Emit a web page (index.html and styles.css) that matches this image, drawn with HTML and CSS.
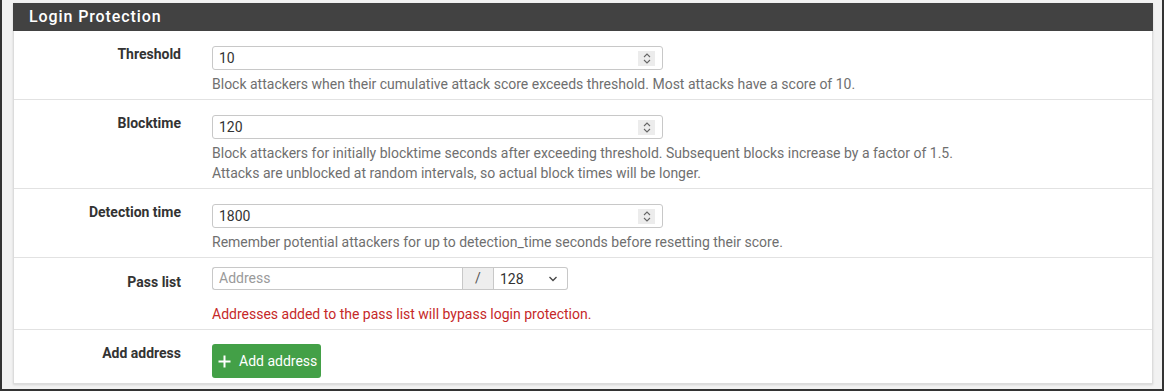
FILE: index.html
```html
<!DOCTYPE html>
<html>
<head>
<meta charset="utf-8">
<link rel="stylesheet" href="styles.css">
</head>
<body>
<div class="frame">
  <div class="panel">
    <div class="panel-heading">Login Protection</div>
    <div class="row">
      <div class="label">Threshold</div>
      <div class="control">
        <div class="input num"><span>10</span><span class="spin"><svg width="10" height="13" viewBox="0 0 10 13"><path d="M2 5 L5 2 L8 5 M2 8 L5 11 L8 8" fill="none" stroke="#666" stroke-width="1.1"/></svg></span></div>
        <div class="help">Block attackers when their cumulative attack score exceeds threshold. Most attacks have a score of 10.</div>
      </div>
    </div>
    <div class="row">
      <div class="label">Blocktime</div>
      <div class="control">
        <div class="input num"><span>120</span><span class="spin"><svg width="10" height="13" viewBox="0 0 10 13"><path d="M2 5 L5 2 L8 5 M2 8 L5 11 L8 8" fill="none" stroke="#666" stroke-width="1.1"/></svg></span></div>
        <div class="help">Block attackers for initially blocktime seconds after exceeding threshold. Subsequent blocks increase by a factor of 1.5.<br>Attacks are unblocked at random intervals, so actual block times will be longer.</div>
      </div>
    </div>
    <div class="row">
      <div class="label">Detection time</div>
      <div class="control">
        <div class="input num"><span>1800</span><span class="spin"><svg width="10" height="13" viewBox="0 0 10 13"><path d="M2 5 L5 2 L8 5 M2 8 L5 11 L8 8" fill="none" stroke="#666" stroke-width="1.1"/></svg></span></div>
        <div class="help">Remember potential attackers for up to detection_time seconds before resetting their score.</div>
      </div>
    </div>
    <div class="row row-pass">
      <div class="label">Pass list</div>
      <div class="control">
        <div class="group">
          <div class="addr">Address</div>
          <div class="addon">/</div>
          <div class="select"><span>128</span><svg width="10" height="6" viewBox="0 0 10 6"><path d="M1.5 1 L5 4.5 L8.5 1" fill="none" stroke="#444" stroke-width="1.3"/></svg></div>
        </div>
        <div class="help danger">Addresses added to the pass list will bypass login protection.</div>
      </div>
    </div>
    <div class="row row-add">
      <div class="label">Add address</div>
      <div class="control">
        <button class="btn"><svg width="13" height="13" viewBox="0 0 13 13"><path d="M6.5 0.5 V12.5 M0.5 6.5 H12.5" stroke="#fff" stroke-width="2"/></svg><span>Add address</span></button>
      </div>
    </div>
  </div>
</div>
</body>
</html>
```

FILE: styles.css
```css
* { box-sizing: border-box; }
html, body { margin: 0; padding: 0; }
body {
  font-family: Roboto, "Liberation Sans", sans-serif;
  font-size: 14px;
  line-height: 20px;
  color: #333;
}
.frame {
  width: 1164px;
  height: 391px;
  border: 2px solid #333;
  border-top: 0;
  background: #f2f2f2;
  padding: 3px 9px 0 11px;
  overflow: hidden;
}
.panel {
  background: #fff;
  border: 1px solid #dcdcdc;
  border-top: 0;
  box-shadow: 0 1px 2px rgba(0,0,0,0.12);
}
.panel-heading {
  background: #424242;
  color: #fff;
  height: 28px;
  margin: 0 -1px;
  padding: 4px 16px 0;
  font-size: 16px;
  line-height: 20px;
  font-weight: 500;
  letter-spacing: 0.9px;
}
.row {
  display: flex;
  padding: 13px 0 5px;
  border-top: 1px solid #e2e2e2;
}
.row:nth-child(2) { border-top: 0; }
.label {
  width: 167px;
  flex: none;
  text-align: right;
  font-weight: 700;
  color: #333;
}
.control {
  margin-left: 31px;
  padding-top: 2px;
}
.input {
  width: 451px;
  height: 24px;
  border: 1px solid #c8c8c8;
  border-radius: 3px;
  background: #fff;
  display: flex;
  align-items: center;
  justify-content: space-between;
  padding: 0 7px 0 6px;
  color: #333;
}
.spin {
  width: 17px;
  height: 15px;
  background: #ececec;
  display: flex;
  align-items: center;
  justify-content: center;
}
.help {
  margin-top: 4px;
  color: #6f6f6f;
}
.danger { color: #c62828; }
.row-pass { padding-top: 9px; padding-bottom: 5px; }
.row-pass .label { margin-top: 5px; }
.row-pass .control { padding-top: 0; }
.row-pass .help { margin-top: 14px; }
.group {
  display: flex;
  height: 23px;
}
.addr {
  width: 250px;
  border: 1px solid #c8c8c8;
  border-right: 0;
  border-radius: 3px 0 0 3px;
  padding-left: 6px;
  color: #9a9a9a;
  line-height: 21px;
}
.addon {
  width: 32px;
  border: 1px solid #c8c8c8;
  background: #eee;
  text-align: center;
  line-height: 21px;
  color: #555;
}
.select {
  width: 74px;
  border: 1px solid #c8c8c8;
  border-left: 0;
  border-radius: 0 3px 3px 0;
  display: flex;
  align-items: center;
  justify-content: space-between;
  padding: 0 9px 0 6px;
  color: #333;
}
.row-add { padding-top: 13px; padding-bottom: 5px; }
.row-add .control { padding-top: 1px; }
.btn {
  height: 34px;
  width: 109px;
  background: #43a047;
  border: 0;
  border-radius: 3px;
  color: #fff;
  font-family: Roboto, "Liberation Sans", sans-serif;
  font-size: 14px;
  display: flex;
  align-items: center;
  padding: 0 0 0 6px;
  gap: 8px;
}
```
